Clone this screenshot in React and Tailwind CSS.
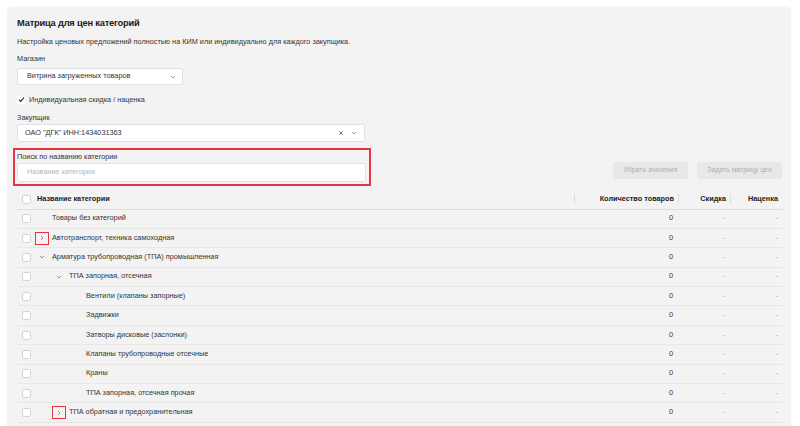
import React from "react";

const rows = [
  { name: "Товары без категорий", level: 0, chevron: null },
  { name: "Автотранспорт, техника самоходная", level: 0, chevron: "right", mark: true },
  { name: "Арматура трубопроводная (ТПА) промышленная", level: 0, chevron: "down" },
  { name: "ТПА запорная, отсечная", level: 1, chevron: "down" },
  { name: "Вентили (клапаны запорные)", level: 2, chevron: null },
  { name: "Задвижки", level: 2, chevron: null },
  { name: "Затворы дисковые (заслонки)", level: 2, chevron: null },
  { name: "Клапаны трубопроводные отсечные", level: 2, chevron: null },
  { name: "Краны", level: 2, chevron: null },
  { name: "ТПА запорная, отсечная прочая", level: 2, chevron: null },
  { name: "ТПА обратная и предохранительная", level: 1, chevron: "right", mark: true },
];

function Chevron({ dir }) {
  return (
    <svg width="6" height="6" viewBox="0 0 6 6" className="text-[#8a8a8a]">
      {dir === "right" ? (
        <path d="M2 1 L4 3 L2 5" fill="none" stroke="currentColor" strokeWidth="0.9" />
      ) : (
        <path d="M1 2 L3 4 L5 2" fill="none" stroke="currentColor" strokeWidth="0.9" />
      )}
    </svg>
  );
}

function Box() {
  return <div className="w-[9px] h-[9px] bg-white border border-[#d4d4d4] rounded-[2px] shrink-0" />;
}

const indents = ["pl-0", "pl-[17px]", "pl-[34px]"];

export default function App() {
  return (
    <div className="w-[800px] h-[426px] bg-white pt-[8px] pl-[8px] pr-[10px] overflow-hidden text-[#333] antialiased [font-family:'Liberation_Sans',Arial,sans-serif]">
      <div className="h-[430px] bg-[#f3f3f3] opacity-[0.995] rounded-[3px] shadow-[0_0_3px_rgba(0,0,0,0.12)] pl-[9px] pr-[7px] pt-[8px]">
        <h1 className="text-[9.3px] tracking-[-0.2px] leading-[14px] font-bold text-[#1a1a1a]">Матрица для цен категорий</h1>
        <p className="mt-[6px] text-[7.3px] leading-[11px]">
          Настройка ценовых предложений полностью на КИМ или индивидуально для каждого закупщика.
        </p>
        <div className="mt-[6px] text-[7.3px] leading-[11px]">Магазин</div>
        <div className="mt-[4px] w-[166px] h-[17px] bg-white border border-[#e2e2e2] rounded-[2px] flex items-center justify-between pl-[9px] pr-[6px] text-[7.3px]">
          <span>Витрина загруженных товаров</span>
          <Chevron dir="down" />
        </div>
        <label className="mt-[9px] flex items-center gap-[4px] text-[7.3px] leading-[11px]">
          <span className="w-[8px] h-[8px] bg-white rounded-[1px] flex items-center justify-center">
            <svg width="7" height="7" viewBox="0 0 7 7">
              <path d="M1 3.6 L2.8 5.4 L6 1.5" fill="none" stroke="#222" strokeWidth="1.1" />
            </svg>
          </span>
          Индивидуальная скидка / наценка
        </label>
        <div className="mt-[7px] text-[7.3px] leading-[11px]">Закупщик</div>
        <div className="mt-[1px] w-[348px] h-[18px] bg-white border border-[#e2e2e2] rounded-[2px] flex items-center justify-between pl-[7px] pr-[7px] text-[7.3px]">
          <span>ОАО "ДГК" ИНН:1434031363</span>
          <span className="flex items-center gap-[7px] text-[#777]">
            <svg width="6" height="6" viewBox="0 0 6 6">
              <path d="M1.2 1.2 L4.8 4.8 M4.8 1.2 L1.2 4.8" stroke="#666" strokeWidth="0.9" />
            </svg>
            <Chevron dir="down" />
          </span>
        </div>

        <div className="mt-[6px] flex items-end justify-between">
          <div className="-ml-[4px] w-[358px] border-2 border-[#e8343f] pl-[2px] pr-[3px] pt-[1px] pb-[2px]">
            <div className="text-[7.3px] leading-[12px]">Поиск по названию категории</div>
            <div className="h-[19px] bg-white border border-[#e2e2e2] rounded-[2px] flex items-center pl-[9px] text-[7.3px] text-[#b5b5b5]">
              Название категории
            </div>
          </div>
          <div className="flex gap-[9px] mb-[7px] mr-[1px]">
            <div className="h-[17px] w-[75px] bg-[#e8e8e8] rounded-[2px] flex items-center justify-center text-[6.9px] text-[#aeaeae]">
              Убрать значения
            </div>
            <div className="h-[17px] w-[85px] bg-[#e8e8e8] rounded-[2px] flex items-center justify-center text-[6.9px] text-[#aeaeae]">
              Задать матрицу цен
            </div>
          </div>
        </div>

        <div className="mt-[4px] text-[7.3px]">
          <div className="flex items-center h-[19.5px] border-b border-[#dcdcdc] font-bold text-[#222]">
            <div className="w-[20px] pl-[5px] shrink-0"><Box /></div>
            <div className="flex-1">Название категории</div>
            <div className="w-[104px] border-l border-[#dedede] h-[10px] flex items-center justify-end pr-[4px]">Количество товаров</div>
            <div className="w-[52px] border-l border-[#dedede] h-[10px] flex items-center justify-end pr-[4px]">Скидка</div>
            <div className="w-[53px] border-l border-[#dedede] h-[10px] flex items-center justify-end pr-[5px]">Наценка</div>
          </div>
          {rows.map((r, i) => (
            <div key={i} className="flex items-center h-[19.4px] border-b border-[#e8e8e8]">
              <div className="w-[20px] pl-[5px] shrink-0"><Box /></div>
              <div className={"flex-1 flex items-center " + indents[r.level]}>
                <div className="w-[14px] ml-[-2px] mr-[3px] h-[13px] flex items-center justify-center shrink-0">
                  {r.chevron && (
                    <div className={"w-[14px] h-[13px] flex items-center justify-center " + (r.mark ? "border-[1.5px] border-[#e8343f]" : "")}>
                      <Chevron dir={r.chevron} />
                    </div>
                  )}
                </div>
                <span>{r.name}</span>
              </div>
              <div className="w-[104px] text-right pr-[5px]">0</div>
              <div className="w-[52px] text-right pr-[5px] text-[#aaa]">-</div>
              <div className="w-[53px] text-right pr-[5px] text-[#aaa]">-</div>
            </div>
          ))}
        </div>
      </div>
    </div>
  );
}
